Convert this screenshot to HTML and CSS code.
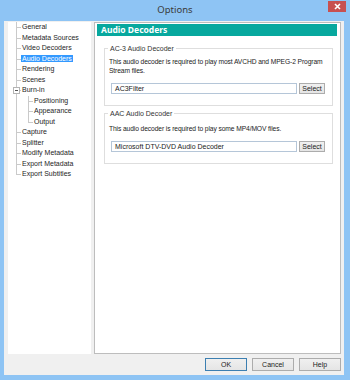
FILE: index.html
```html
<!DOCTYPE html>
<html>
<head>
<meta name="viewport" content="width=device-width, initial-scale=1">
<link rel="stylesheet" href="styles.css">
</head>
<body>

<div class="window">
  <div class="titlebar">
    <span class="title">Options</span>
    <span class="closeBtn">
      <svg width="7" height="7" viewBox="0 0 7 7"><path d="M1 1L6 6M6 1L1 6" stroke="#fff" stroke-width="1.6"/></svg>
    </span>
  </div>

  <div class="client">
    <div class="main">
      <div class="tree">
        <ul class="treeList">
          <li>General</li>
          <li>Metadata Sources</li>
          <li>Video Decoders</li>
          <li><span class="selected">Audio Decoders</span></li>
          <li>Rendering</li>
          <li>Scenes</li>
          <li class="open"><span class="expander"></span>Burn-in
            <ul>
              <li>Positioning</li>
              <li>Appearance</li>
              <li>Output</li>
            </ul>
          </li>
          <li>Capture</li>
          <li>Splitter</li>
          <li>Modify Metadata</li>
          <li>Export Metadata</li>
          <li>Export Subtitles</li>
        </ul>
      </div>

      <div class="panel">
        <div class="panelHead">Audio Decoders</div>

        <fieldset class="group first">
          <legend>AC-3 Audio Decoder</legend>
          <p class="desc">This audio decoder is required to play most AVCHD and MPEG-2 Program Stream files.</p>
          <div class="pickRow">
            <div class="textBox">AC3Filter</div>
            <span class="btn small">Select</span>
          </div>
        </fieldset>

        <fieldset class="group second">
          <legend>AAC Audio Decoder</legend>
          <p class="desc">This audio decoder is required to play some MP4/MOV files.</p>
          <div class="pickRow">
            <div class="textBox">Microsoft DTV-DVD Audio Decoder</div>
            <span class="btn small">Select</span>
          </div>
        </fieldset>
      </div>
    </div>

    <div class="footer">
      <span class="btn default">OK</span>
      <span class="btn">Cancel</span>
      <span class="btn">Help</span>
    </div>
  </div>
</div>

</body>
</html>
```

FILE: styles.css
```css
* {
  box-sizing: border-box;
}

body {
  margin: 0;
  font-family: "Liberation Sans", Arial, sans-serif;
  font-size: 7px;
  color: #1e1e1e;
}

/* Outer window frame */
.window {
  width: 350px;
  height: 380px;
  background: #8ec4f4;
  display: flex;
  flex-direction: column;
}

.titlebar {
  height: 21px;
  position: relative;
  display: flex;
  align-items: center;
  justify-content: center;
}

.title {
  font-family: "Noto Sans", sans-serif;
  font-size: 9.5px;
  color: #3a3a3a;
  margin-top: -3px;
}

.closeBtn {
  position: absolute;
  top: 1px;
  right: 4px;
  width: 18px;
  height: 11px;
  background: #c75050;
  display: flex;
  align-items: center;
  justify-content: center;
}

.client {
  flex: 1;
  margin: 0 6px 5px 4px;
  background: #f0f0f0;
  padding: 1px 3px 4px 4px;
  display: flex;
  flex-direction: column;
}

.main {
  height: 332px;
  display: flex;
  gap: 3px;
}

/* Left tree */
.tree {
  width: 83px;
  background: #fff;
}

.treeList, .treeList ul {
  list-style: none;
  margin: 0;
  padding: 0;
}

.treeList {
  padding-left: 8px;
}

.treeList li {
  position: relative;
  padding-left: 6px;
  line-height: 10.5px;
  white-space: nowrap;
}

.treeList ul {
  margin-left: 6px;
}

/* dotted connector lines */
.treeList li::before {
  content: "";
  position: absolute;
  left: 0;
  top: 0;
  width: 4px;
  height: 5px;
  border-left: 1px solid #cacaca;
  border-bottom: 1px solid #cacaca;
}

.treeList li::after {
  content: "";
  position: absolute;
  left: 0;
  top: 5px;
  bottom: 0;
  border-left: 1px solid #cacaca;
}

.treeList li:last-child::after {
  display: none;
}

.expander {
  position: absolute;
  left: -3px;
  top: 2px;
  width: 7px;
  height: 7px;
  border: 1px solid #b4b4b4;
  background: #fff;
  z-index: 1;
}

.expander::before {
  content: "";
  position: absolute;
  left: 1px;
  top: 2px;
  width: 3px;
  height: 1px;
  background: #555;
}

.selected {
  background: #3399ff;
  color: #fff;
  padding: 0 1px;
  margin-left: -1px;
}

/* Right panel */
.panel {
  flex: 1;
  background: #fff;
  border: 1px solid #bdbdbd;
  padding: 1px 3px 0 2px;
}

.panelHead {
  background: #07a89e;
  color: #fff;
  font-family: "Noto Sans", sans-serif;
  font-weight: bold;
  font-size: 8.5px;
  height: 12px;
  line-height: 12px;
  padding-left: 4px;
}

.group {
  border: 1px solid #dedede;
  margin: 0 4px 0 7px;
  padding: 0 7px 11px 4px;
  min-width: 0;
}

.group legend {
  padding: 0 2px;
  margin-left: -1px;
  line-height: 9px;
  color: #333;
}

.group.first {
  margin-top: 8px;
}

.group.first .desc {
  margin-top: 4px;
  margin-right: -5px;
}

.group.second {
  margin-top: 3px;
}

.group.second .desc {
  margin-top: 6px;
}

.desc {
  margin: 0;
  line-height: 9px;
  color: #222;
  font-size: 6.7px;
  letter-spacing: -0.1px;
}

.pickRow {
  display: flex;
  gap: 2px;
  margin-top: 8px;
  margin-left: 2px;
}

.textBox {
  flex: 1;
  height: 11px;
  line-height: 9px;
  border: 1px solid #b5c6d8;
  padding-left: 3px;
  color: #222;
}

/* Buttons */
.btn {
  display: inline-flex;
  align-items: center;
  justify-content: center;
  width: 42px;
  height: 13px;
  border: 1px solid #acacac;
  background: linear-gradient(#f0f0f0, #e5e5e5);
  color: #222;
}

.btn.small {
  width: 26px;
  height: 11px;
}

.btn.default {
  border-color: #3c7fb1;
}

.footer {
  margin-top: 4px;
  display: flex;
  justify-content: flex-end;
  gap: 5px;
}
```
